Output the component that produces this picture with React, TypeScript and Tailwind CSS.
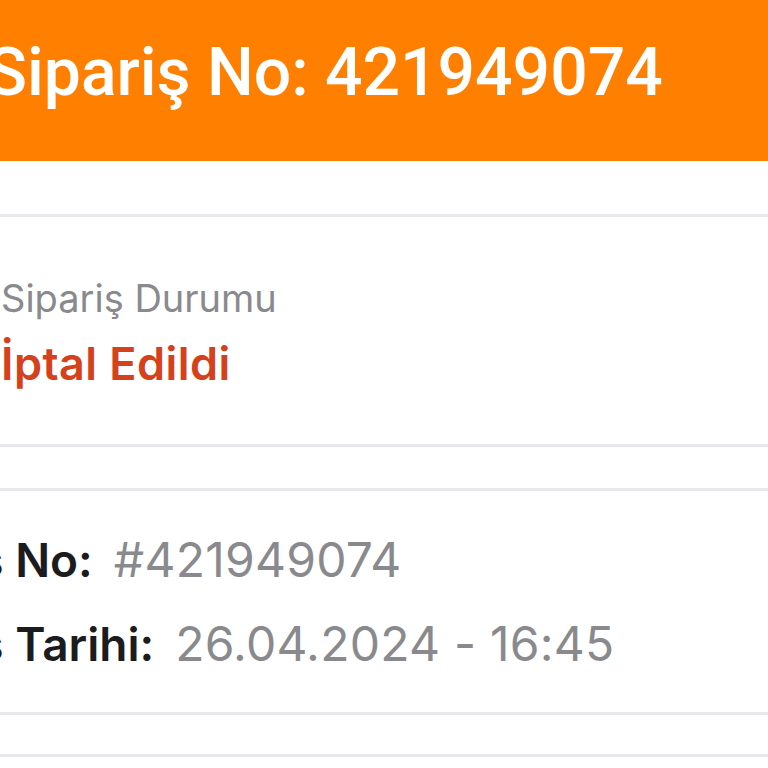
import React from 'react';

const rows = [
  { label: 'Sipariş No:', value: '#421949074' },
  { label: 'Sipariş Tarihi:', value: '26.04.2024 - 16:45' },
];

export default function App() {
  return (
    <div className="w-[768px] h-[768px] overflow-hidden bg-white font-['Inter',sans-serif]">
      {/* Header */}
      <div className="h-[161px] bg-[#ff8000] flex items-center">
        <h1 className="-ml-[13px] whitespace-nowrap font-['Roboto',sans-serif] font-medium text-[66px] leading-none text-white pb-[16px]">
          Sipariş No: 421949074
        </h1>
      </div>

      <div className="h-[53px]" />

      {/* Status */}
      <div className="border-y-[3px] border-[#e9e9ed] h-[233px] flex flex-col justify-center">
        <div className="ml-[1px] whitespace-nowrap">
          <p className="text-[38px] leading-[44px] text-[#8a8a8e]">Sipariş Durumu</p>
          <p className="mt-[22px] text-[45px] leading-[44px] font-semibold tracking-[0.01em] text-[#d4411a]">İptal Edildi</p>
        </div>
      </div>

      <div className="h-[41px]" />

      {/* Details */}
      <div className="border-y-[3px] border-[#e9e9ed] h-[227px] flex flex-col justify-center gap-[36px]">
        {rows.map(r => (
          <div key={r.label} className="-ml-[150px] flex items-baseline gap-[21px] whitespace-nowrap leading-[48px]">
            <span className="text-[46px] font-semibold text-[#1c1c1e]">{r.label}</span>
            <span className="text-[48px] tracking-[0.005em] text-[#8a8a8e]">{r.value}</span>
          </div>
        ))}
      </div>

      <div className="h-[39px]" />
      <div className="border-t-[3px] border-[#e9e9ed]" />
    </div>
  );
}
